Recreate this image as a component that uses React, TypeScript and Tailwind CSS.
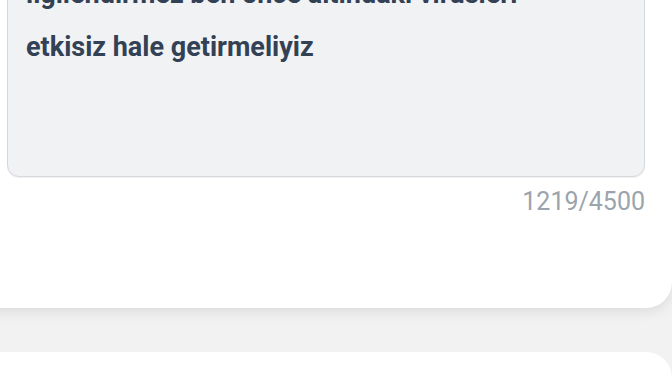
import React from "react";

export default function App() {
  return (
    <div className="w-[672px] h-[378px] overflow-hidden bg-[#f2f2f2] flex flex-col" style={{ fontFamily: "Roboto, 'Noto Sans', sans-serif" }}>
      <div className="h-[308px] shrink-0 w-[700px] -ml-[28px] bg-white rounded-br-[26px] shadow-[0_3px_14px_rgba(0,0,0,0.10)] flex flex-col pl-[35px] pr-[27px] relative z-10">
        <div className="-mt-[60px] h-[237px] shrink-0 rounded-[12px] border border-[#d5d8dd] bg-[#f1f2f4] shadow-[0_1px_1px_rgba(0,0,0,0.06)] pt-[27px] pl-[18px] pr-[18px] text-[27px] leading-[53px] font-bold text-[#334155]">
          <div className="whitespace-nowrap">ilgilendirmez ben önce altındaki virüsleri</div>
          <div className="whitespace-nowrap">etkisiz hale getirmeliyiz</div>
        </div>
        <div className="mt-[11px] text-right text-[25px] leading-[28px] text-[#9ba4ac]">1219/4500</div>
      </div>
      <div className="mt-[44px] h-[60px] shrink-0 w-[700px] -ml-[28px] bg-white rounded-tr-[26px]"></div>
    </div>
  );
}
